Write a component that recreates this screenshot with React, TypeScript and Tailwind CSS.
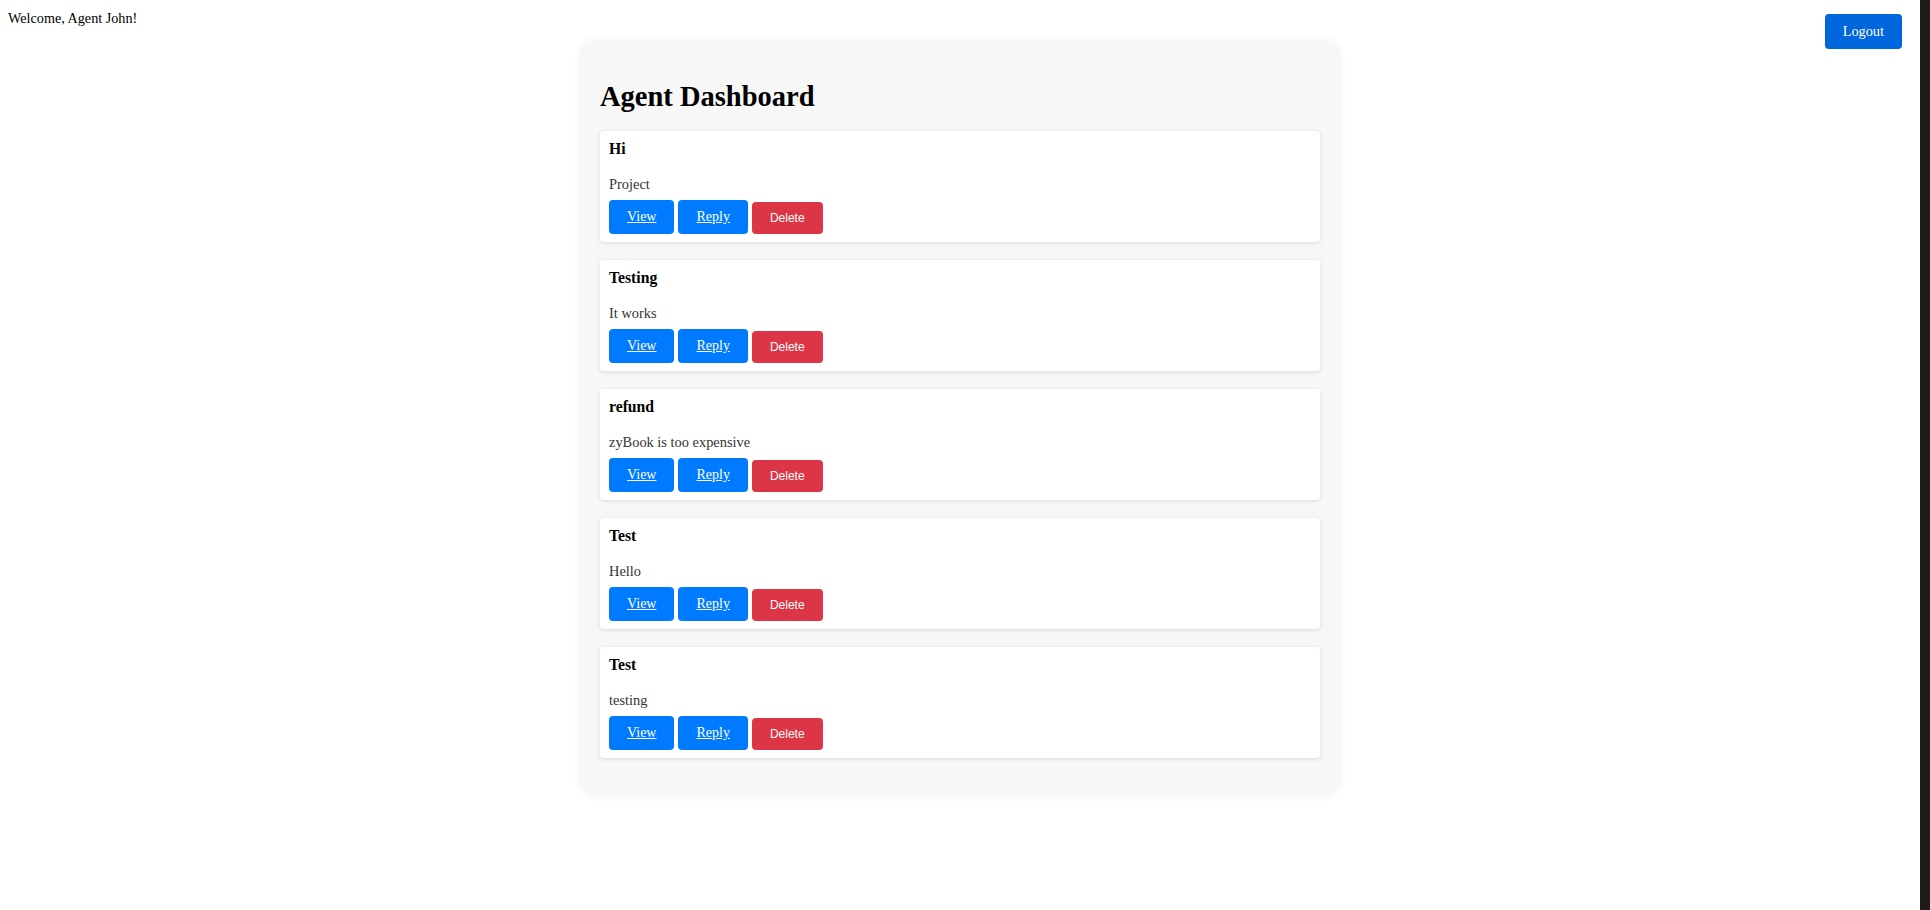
import React from 'react';

const tickets = [
  { title: 'Hi', body: 'Project' },
  { title: 'Testing', body: 'It works' },
  { title: 'refund', body: 'zyBook is too expensive' },
  { title: 'Test', body: 'Hello' },
  { title: 'Test', body: 'testing' },
];

export default function App() {
  return (
    <div className="flex min-h-[910px] bg-white text-black font-['Liberation_Serif','Times_New_Roman',serif]">
      <div className="relative flex-1 px-[8px] pt-[8px]">
        {/* Header */}
        <div className="mt-[1px] h-[18px] text-[14.2px] leading-[18px]">Welcome, Agent John!</div>
        <button className="absolute top-[14px] right-[18px] h-[35px] px-[18px] rounded-[4px] bg-[#0066dc] text-white text-[14.3px] leading-[35px]">
          Logout
        </button>

        {/* Dashboard */}
        <div className="mx-auto mt-[16px] w-[756px] px-[18px] pt-[18px] pb-[36px] bg-[#f7f7f7] rounded-[10px] shadow-[0_0_10px_rgba(0,0,0,0.09)]">
          <h1 className="mt-[17px] mb-[16px] text-[28.5px] leading-[37px] font-bold">Agent Dashboard</h1>
          <div className="flex flex-col gap-[18px]">
            {tickets.map((t, i) => (
              <div key={i} className="bg-white rounded-[4px] px-[9px] pt-[9px] pb-[8px] shadow-[0_1px_4px_rgba(0,0,0,0.12)]">
                <div className="h-[18px] text-[15.7px] leading-[18px] font-bold">{t.title}</div>
                <p className="mt-[17px] h-[18px] text-[14.4px] leading-[18px] text-[#333]">{t.body}</p>
                <div className="mt-[7px] flex items-end gap-[4px]">
                  <a href="#" className="h-[34px] px-[18px] rounded-[4px] bg-[#007bff] text-white text-[14px] leading-[34px] underline">View</a>
                  <a href="#" className="h-[34px] px-[18px] rounded-[4px] bg-[#007bff] text-white text-[14px] leading-[34px] underline">Reply</a>
                  <button className="h-[32px] px-[18px] rounded-[4px] bg-[#dc3545] text-white text-[12px] leading-[32px] font-['Liberation_Sans',Arial,sans-serif]">Delete</button>
                </div>
              </div>
            ))}
          </div>
        </div>
      </div>
      <div className="w-[10px] bg-[#1e1b18]" />
    </div>
  );
}
